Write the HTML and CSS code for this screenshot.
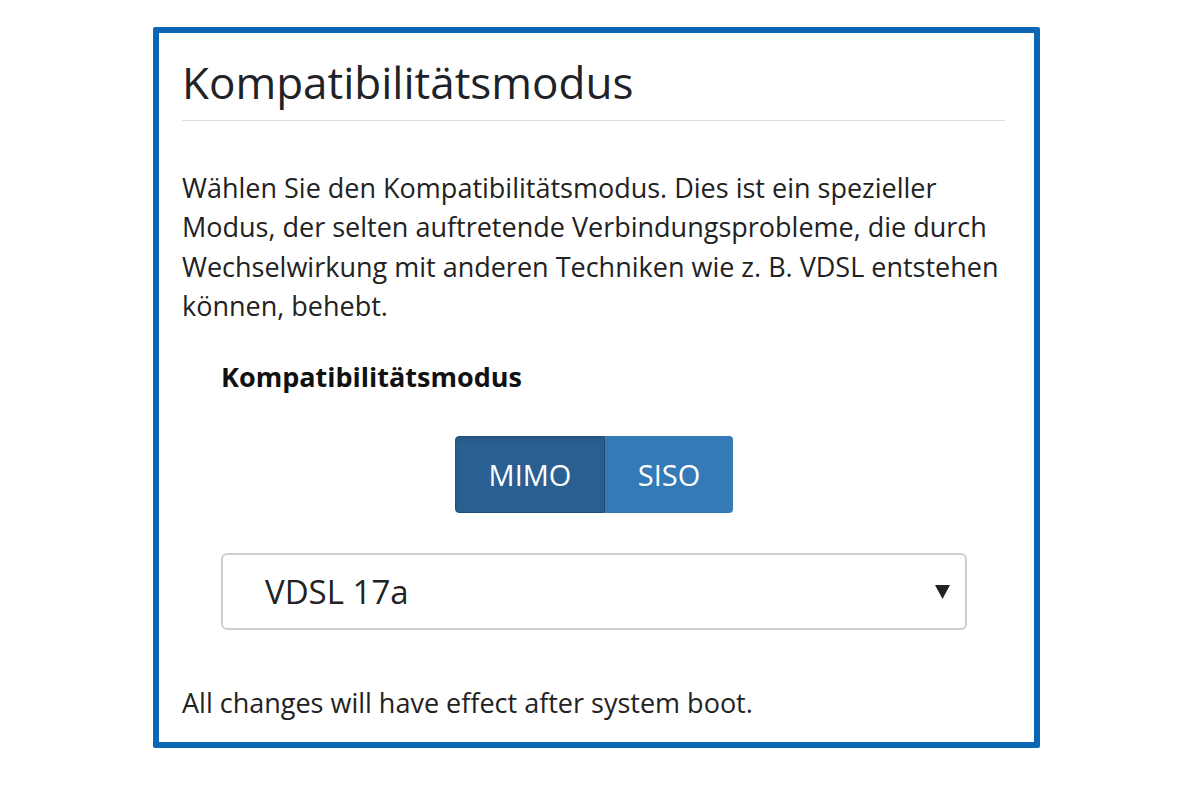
FILE: index.html
```html
<!DOCTYPE html>
<html lang="de">
<head>
<meta charset="utf-8">
<link rel="stylesheet" href="styles.css">
</head>
<body>
<div class="card">
  <h1 class="title">Kompatibilitätsmodus</h1>
  <p class="desc">Wählen Sie den Kompatibilitätsmodus. Dies ist ein spezieller Modus, der selten auftretende Verbindungsprobleme, die durch Wechselwirkung mit anderen Techniken wie z. B. VDSL entstehen können, behebt.</p>
  <div class="field">
    <div class="label">Kompatibilitätsmodus</div>
    <div class="toggle">
      <span class="seg active">MIMO</span><span class="seg">SISO</span>
    </div>
    <div class="select">
      <span class="select-text">VDSL 17a</span>
      <svg class="caret" width="15" height="14" viewBox="0 0 15 14"><polygon points="0,0 15,0 7.5,14" fill="#222"/></svg>
    </div>
  </div>
  <p class="note">All changes will have effect after system boot.</p>
</div>
</body>
</html>
```
FILE: styles.css
```css
html, body {
  margin: 0;
  padding: 0;
  background: #fff;
}
body {
  font-family: "Open Sans", "DejaVu Sans", sans-serif;
  color: #222;
}
.card {
  box-sizing: border-box;
  width: 887px;
  height: 721px;
  margin: 27px 0 0 153px;
  border: 6px solid #0b66b3;
  border-radius: 2px;
  padding: 0 29px 0 23px;
}
.title {
  margin: 0;
  padding-top: 19px;
  padding-bottom: 8px;
  font-size: 44px;
  line-height: 60px;
  font-weight: 400;
  color: #1f2328;
  border-bottom: 1px solid #dedede;
}
.desc {
  margin: 47px 0 0;
  font-size: 27px;
  line-height: 39.3px;
  color: #222;
}
.field {
  padding-left: 39px;
  padding-right: 38px;
  margin-top: 37px;
}
.label {
  font-size: 27px;
  font-weight: 700;
  line-height: 30px;
  color: #111;
}
.toggle {
  display: flex;
  justify-content: center;
  margin-top: 44px;
}
.seg {
  display: flex;
  align-items: center;
  justify-content: center;
  height: 77px;
  box-sizing: border-box;
  background: #337ab7;
  color: #fff;
  font-size: 29px;
  width: 128px;
  border-radius: 0 4px 4px 0;
}
.seg.active {
  width: 150px;
  background: #2a5f92;
  border: 1px solid #214f7b;
  border-radius: 4px 0 0 4px;
  box-shadow: inset 0 2px 4px rgba(0,0,0,0.12);
}
.select {
  display: flex;
  align-items: center;
  justify-content: space-between;
  box-sizing: border-box;
  height: 77px;
  margin-top: 40px;
  border: 2px solid #cfcfcf;
  border-radius: 6px;
  padding: 0 15px 0 42px;
}
.select-text {
  font-size: 33px;
  color: #222;
}
.caret {
  display: block;
  margin-top: 0;
}
.note {
  margin: 55px 0 0;
  font-size: 27px;
  line-height: 36px;
  color: #222;
}
```
